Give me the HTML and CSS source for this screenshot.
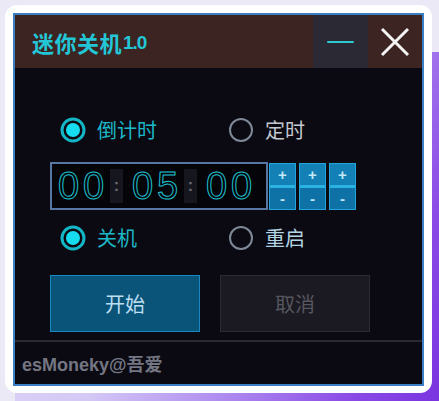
FILE: index.html
```html
<!DOCTYPE html>
<html lang="zh-CN">
<head>
<meta charset="utf-8">
<title>迷你关机</title>
<link rel="stylesheet" href="styles.css">
</head>
<body>
<div class="glow"></div>
<div class="card">
  <div class="win">
    <div class="titlebar">
      <div class="title">迷你关机<span class="ver">1.0</span></div>
      <div class="tbtn min"><span class="dash"></span></div>
      <div class="tbtn close">
        <svg width="30" height="30" viewBox="0 0 30 30"><path d="M2 2 L28 28 M28 2 L2 28" stroke="#f4f4f4" stroke-width="3" fill="none"/></svg>
      </div>
    </div>
    <div class="content">
      <div class="radios">
        <div class="radio on">
          <svg width="26" height="26" viewBox="0 0 26 26"><circle cx="13" cy="13" r="11" fill="none" stroke="#13b6c6" stroke-width="3"/><circle cx="13" cy="13" r="7" fill="#16dcf0"/></svg>
          <span class="lbl">倒计时</span>
        </div>
        <div class="radio">
          <svg width="26" height="26" viewBox="0 0 26 26"><circle cx="13" cy="13" r="11" fill="none" stroke="#7e8896" stroke-width="2"/></svg>
          <span class="lbl gray">定时</span>
        </div>
      </div>
      <div class="timerow">
        <div class="timebox">
          <span class="dg">0</span><span class="dg">0</span>
          <span class="colon">:</span>
          <span class="dg">0</span><span class="dg">5</span>
          <span class="colon">:</span>
          <span class="dg">0</span><span class="dg">0</span>
        </div>
        <div class="spins">
          <div class="spin"><span class="up">+</span><span class="down">-</span></div>
          <div class="spin"><span class="up">+</span><span class="down">-</span></div>
          <div class="spin"><span class="up">+</span><span class="down">-</span></div>
        </div>
      </div>
      <div class="radios second">
        <div class="radio on">
          <svg width="26" height="26" viewBox="0 0 26 26"><circle cx="13" cy="13" r="11" fill="none" stroke="#13b6c6" stroke-width="3"/><circle cx="13" cy="13" r="7" fill="#16dcf0"/></svg>
          <span class="lbl">关机</span>
        </div>
        <div class="radio">
          <svg width="26" height="26" viewBox="0 0 26 26"><circle cx="13" cy="13" r="11" fill="none" stroke="#7e8896" stroke-width="2"/></svg>
          <span class="lbl pale">重启</span>
        </div>
      </div>
      <div class="buttons">
        <div class="btn start">开始</div>
        <div class="btn cancel">取消</div>
      </div>
    </div>
    <div class="footer">esMoneky@吾爱</div>
  </div>
</div>
</body>
</html>
```
FILE: styles.css
```css
html, body {
  margin: 0;
  padding: 0;
}
body {
  width: 439px;
  height: 401px;
  background: #ebe9f5;
  position: relative;
  overflow: hidden;
  font-family: "Noto Sans CJK SC", "Liberation Sans", sans-serif;
}
.glow {
  position: absolute;
  left: 15px;
  top: 52px;
  right: 0;
  bottom: 0;
  background: linear-gradient(115deg, #e4def8 0%, #d4c8f5 40%, #b08ef0 62%, #8a4ae6 85%, #7a34e0 100%);
  border-radius: 20px 0 0 0;
}
.card {
  position: relative;
  margin: 5px 0 0 5px;
  width: 427px;
  height: 388px;
  box-sizing: border-box;
  padding: 8px 8px 7px 8px;
  background: #ffffff;
  border-radius: 12px;
}
.win {
  width: 411px;
  height: 373px;
  box-sizing: border-box;
  border: 2px solid #3c7ec4;
  background: #0b0a12;
  display: flex;
  flex-direction: column;
}
.titlebar {
  height: 53px;
  display: flex;
  background: #3c2422;
}
.title {
  flex: 1;
  display: flex;
  align-items: center;
  padding-left: 17px;
  color: #22c6d6;
  font-size: 22px;
  font-weight: 700;
  letter-spacing: 0.5px;
}
.ver {
  font-family: "Liberation Sans", sans-serif;
  font-size: 19px;
  font-weight: 700;
  letter-spacing: -1px;
  margin-left: 1px;
  margin-top: 3px;
}
.tbtn {
  width: 55px;
  display: flex;
  align-items: center;
  justify-content: center;
}
.min {
  background: #2a2934;
}
.dash {
  width: 27px;
  height: 2px;
  border-radius: 1px;
  background: #2ec8d0;
}
.close {
  width: 54px;
}
.content {
  padding: 49px 0 0 35px;
  flex: 1;
}
.radios {
  display: flex;
  padding-left: 10px;
  height: 26px;
}
.radios.second {
  margin-top: 15px;
}
.radio {
  display: flex;
  align-items: center;
  gap: 11px;
  width: 168px;
}
.lbl {
  font-size: 20px;
  line-height: 26px;
  color: #1cb8c8;
}
.lbl.gray {
  color: #c4c8d0;
}
.lbl.pale {
  color: #b4d6e4;
}
.timerow {
  margin-top: 19px;
  display: flex;
  align-items: flex-start;
}
.timebox {
  width: 218px;
  height: 48px;
  box-sizing: border-box;
  border: 2px solid #5876a2;
  background: #050509;
  display: flex;
  align-items: center;
  padding-left: 6px;
}
.dg {
  width: 20px;
  margin-right: 5px;
  text-align: center;
  font-family: "Liberation Sans", sans-serif;
  font-size: 38px;
  line-height: 40px;
  color: transparent;
  -webkit-text-stroke: 1px #1ec2d2;
}
.colon {
  width: 13px;
  height: 34px;
  margin: 0 9px 0 2px;
  background: #16161e;
  color: #6c6c74;
  font-family: "Liberation Sans", sans-serif;
  font-size: 16px;
  font-weight: 700;
  line-height: 34px;
  text-align: center;
}
.spins {
  display: flex;
  gap: 3px;
  margin-left: 1px;
  margin-top: 1px;
}
.spin {
  width: 27px;
  height: 47px;
  box-sizing: border-box;
  border: 1px solid #22a4dc;
  display: flex;
  flex-direction: column;
}
.up, .down {
  flex: 1;
  display: flex;
  align-items: center;
  justify-content: center;
  color: #c4e8f6;
  font-family: "Liberation Sans", sans-serif;
  font-size: 15px;
  font-weight: 700;
}
.up {
  background: #1380b6;
  border-bottom: 3px solid #2ab2e2;
}
.down {
  background: #0e72a6;
}
.buttons {
  margin-top: 24px;
  display: flex;
  gap: 20px;
}
.btn {
  width: 150px;
  height: 57px;
  box-sizing: border-box;
  display: flex;
  align-items: center;
  justify-content: center;
  font-size: 20px;
}
.start {
  background: #0b5479;
  border: 1px solid #1688c2;
  color: #bcdff2;
}
.cancel {
  background: #1b1a22;
  border: 1px solid #2b2a33;
  color: #56565f;
}
.footer {
  height: 42px;
  border-top: 2px solid #2a2a33;
  display: flex;
  align-items: center;
  padding-left: 7px;
  color: #747783;
  font-family: "Liberation Sans", "Noto Sans CJK SC", sans-serif;
  font-size: 18px;
  font-weight: 700;
}
```
